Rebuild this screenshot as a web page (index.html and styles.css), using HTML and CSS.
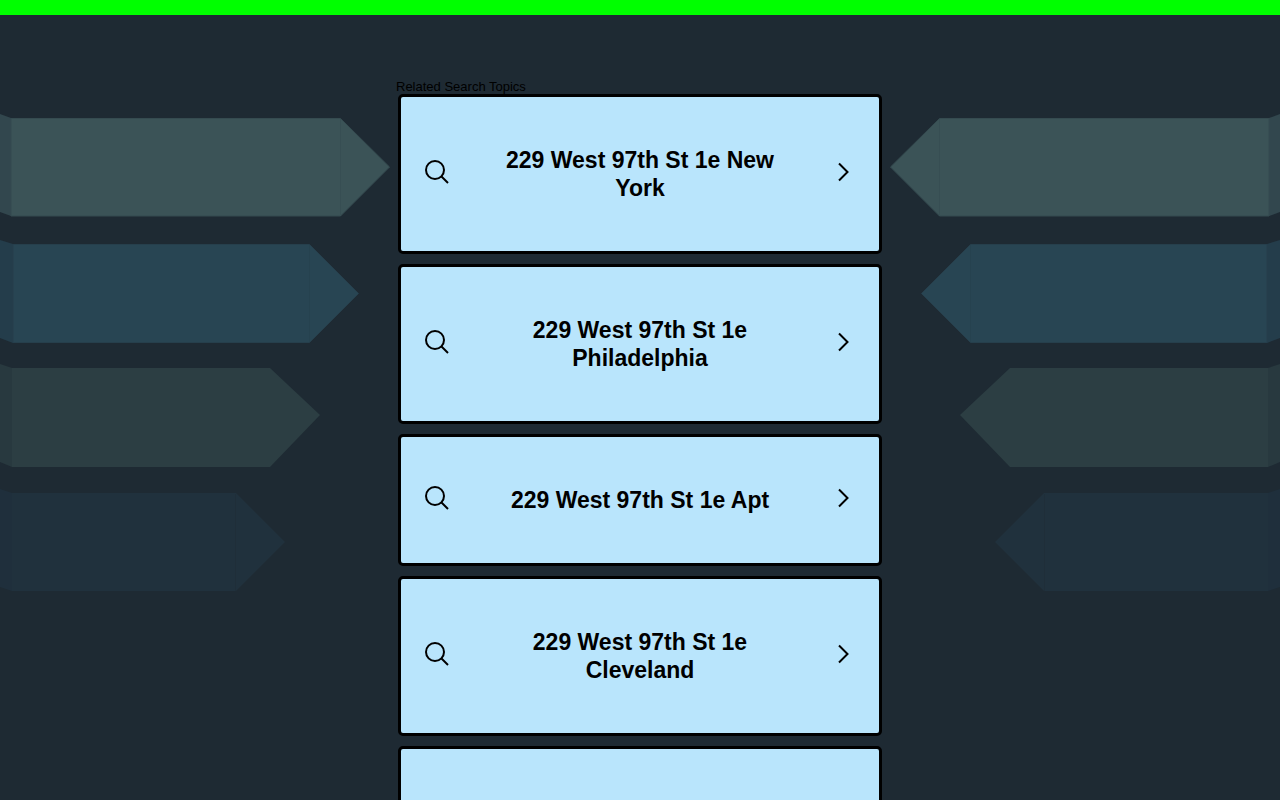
FILE: index.html
```html
<!DOCTYPE html>
<html lang="en">
<head>
  <meta charset="UTF-8">
  <meta name="viewport" content="width=device-width, initial-scale=1.0">
  <title>Related Search Topics</title>
  <link rel="stylesheet" href="styles.css">
</head>
<body>
  <svg class="symbols" aria-hidden="true">
    <symbol id="search" viewBox="0 0 24 24">
      <circle cx="10" cy="10" r="9"/>
      <path d="M16.5 16.5 L23 23"/>
    </symbol>
    <symbol id="chevron" viewBox="0 0 12 20">
      <path d="M2 1.5 L10.500 10 L2 18.500"/>
    </symbol>
    <symbol id="arrows" viewBox="0 0 400 490">
      <path fill="#32474e" d="M0 4 L11 8 V106 L0 102 Z"/>
      <path fill="#3b5357" stroke="#354b50" d="M11 8.5 H340.500 L389.500 57 L340.500 106 H11 Z"/>
      <path stroke="#374e53" d="M340.500 9 V106"/>
      <path fill="#243d4b" d="M0 130 L13 134 V233 L0 228 Z"/>
      <path fill="#284553" stroke="#263f4c" d="M13 134.500 H309.500 L358.500 183.500 L309.500 232.500 H13 Z"/>
      <path stroke="#26424f" d="M309.500 135 V232"/>
      <path fill="#28393f" d="M0 254 L12 258 V357 L0 352 Z"/>
      <path fill="#2c3e43" d="M12 258 H270 L320 305 L270 357 H12 Z"/>
      <path fill="#1f2f3c" d="M0 379 L12 383 V481 L0 477 Z"/>
      <path fill="#20313d" d="M12 383 H236 L285 432 L236 481 H12 Z"/>
      <path stroke="#1f2e39" d="M235.500 384 V481"/>
    </symbol>
  </svg>

  <div class="top-bar"></div>
  <svg class="arrows arrows-left" aria-hidden="true"><use href="#arrows"/></svg>
  <svg class="arrows arrows-right" aria-hidden="true"><use href="#arrows"/></svg>

  <main class="container">
    <h1>Related Search Topics</h1>
    <nav class="topics" aria-label="Related Search Topics">
      <a class="topic" href="#">
        <svg class="icon-search" aria-hidden="true"><use href="#search"/></svg>
        <span>229 West 97th St 1e New York</span>
        <svg class="icon-chevron" aria-hidden="true"><use href="#chevron"/></svg>
      </a>
      <a class="topic" href="#">
        <svg class="icon-search" aria-hidden="true"><use href="#search"/></svg>
        <span>229 West 97th St 1e Philadelphia</span>
        <svg class="icon-chevron" aria-hidden="true"><use href="#chevron"/></svg>
      </a>
      <a class="topic" href="#">
        <svg class="icon-search" aria-hidden="true"><use href="#search"/></svg>
        <span>229 West 97th St 1e Apt</span>
        <svg class="icon-chevron" aria-hidden="true"><use href="#chevron"/></svg>
      </a>
      <a class="topic" href="#">
        <svg class="icon-search" aria-hidden="true"><use href="#search"/></svg>
        <span>229 West 97th St 1e Cleveland</span>
        <svg class="icon-chevron" aria-hidden="true"><use href="#chevron"/></svg>
      </a>
      <a class="topic" href="#">
        <svg class="icon-search" aria-hidden="true"><use href="#search"/></svg>
        <span>229 West 97th St 1e New York</span>
        <svg class="icon-chevron" aria-hidden="true"><use href="#chevron"/></svg>
      </a>
    </nav>
  </main>
</body>
</html>
```
FILE: styles.css
```css
body {
  font-family: "Liberation Sans", Arial, sans-serif;
  margin: 0;
  background-color: #1e2a33;
  color: #000;
}
.symbols {
  position: absolute;
  width: 0;
  height: 0;
}
.top-bar {
  height: 15px;
  background-color: #00ff00;
}
/* decorative ribbons behind the list */
.arrows {
  position: absolute;
  top: 110px;
  width: 400px;
  height: 490px;
  fill: none;
}
.arrows-left {
  left: 0;
}
.arrows-right {
  right: 0;
  transform: scaleX(-1);
}
.container {
  position: relative;
  max-width: 488px;
  margin: 0 auto;
  padding-top: 64px;
}
h1 {
  margin: 0;
  font-size: 13px;
  line-height: 15px;
  font-weight: normal;
}
.topics {
  display: flex;
  flex-direction: column;
  gap: 10px;
  padding: 0 2px;
}
.topic {
  display: grid;
  grid-template-columns: 24px 1fr 24px;
  gap: 52px;
  align-items: center;
  padding: 49px 24px;
  border: 3px solid #000;
  border-radius: 5px;
  background-color: #b9e5fc;
  color: #000;
  font-size: 23px;
  line-height: 28px;
  font-weight: bold;
  text-align: center;
  text-decoration: none;
}
.topic:hover {
  background-color: #a5dcf8;
}
.topic svg {
  fill: none;
  stroke: #000;
  stroke-width: 2;
  margin-bottom: 4px;
}
.icon-search {
  width: 24px;
  height: 24px;
}
.icon-chevron {
  width: 12px;
  height: 20px;
  justify-self: center;
}
```
